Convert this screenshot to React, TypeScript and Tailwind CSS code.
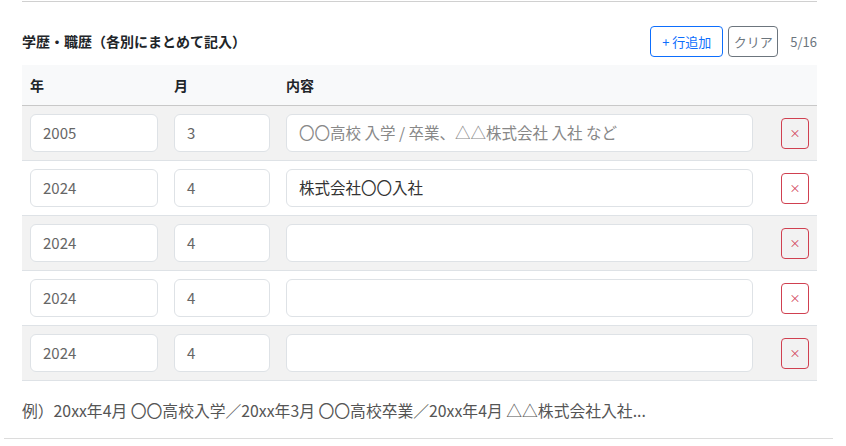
import React from "react";

type Row = { year: string; month: string; content: string };

const rows: Row[] = [
  { year: "2005", month: "3", content: "" },
  { year: "2024", month: "4", content: "株式会社〇〇入社" },
  { year: "2024", month: "4", content: "" },
  { year: "2024", month: "4", content: "" },
  { year: "2024", month: "4", content: "" },
];

const font = {
  fontFamily: '"Noto Sans CJK JP", "Noto Sans", sans-serif',
};

function HistoryRow({ row, index }: { row: Row; index: number }) {
  const striped = index % 2 === 0;
  return (
    <div
      className={`grid h-[55px] grid-cols-[144px_112px_483px_56px] items-center border-b border-[#dee2e6] ${
        striped ? "bg-[#f2f2f2]" : "bg-white"
      }`}
    >
      <div className="px-2">
        <div className="flex h-[38px] items-center rounded-md border border-[#dee2e6] bg-white px-3 text-[15px] text-[#666]">
          {row.year}
        </div>
      </div>
      <div className="px-2">
        <div className="flex h-[38px] items-center rounded-md border border-[#dee2e6] bg-white px-3 text-[15px] text-[#666]">
          {row.month}
        </div>
      </div>
      <div className="px-2">
        <div className="flex h-[38px] items-center rounded-md border border-[#dee2e6] bg-white px-3 text-[15.5px]">
          {index === 0 ? (
            <span className="text-[#888]">
              〇〇高校 入学 / 卒業、△△株式会社 入社 など
            </span>
          ) : (
            <span className="text-[#333]">{row.content}</span>
          )}
        </div>
      </div>
      <div className="flex justify-end px-2">
        <button className="flex h-[31px] w-[28px] items-center justify-center rounded border border-[#d04050] text-[11px] leading-none text-[#d04050]">
          ×
        </button>
      </div>
    </div>
  );
}

export default function App() {
  return (
    <div className="h-[446px] w-[846px] bg-white text-[#212529]" style={font}>
      <div className="pt-px">
        <div className="ml-[22px] w-[795px] border-t border-[#d0d0d0]" />
      </div>

      <section className="ml-[22px] w-[795px]">
        <div className="mt-[24px] flex h-[31px] items-center justify-between">
          <h2 className="text-[14px] font-semibold">学歴・職歴（各別にまとめて記入）</h2>
          <div className="flex items-center">
            <button className="h-[31px] w-[73px] rounded border border-[#0d6efd] text-[13px] text-[#0d6efd]">
              + 行追加
            </button>
            <button className="ml-[5px] h-[31px] w-[50px] rounded border border-[#6c757d] text-[13px] text-[#6c757d]">
              クリア
            </button>
            <span className="ml-[12px] text-[13px] text-[#6c757d]">5/16</span>
          </div>
        </div>

        <div className="mt-2">
          <div className="grid h-[41px] grid-cols-[144px_112px_483px_56px] items-center border-b border-[#c8c8c8] bg-[#f8f9fa] text-[14px] font-bold">
            <div className="px-2">年</div>
            <div className="px-2">月</div>
            <div className="px-2">内容</div>
            <div />
          </div>
          {rows.map((row, i) => (
            <HistoryRow key={i} row={row} index={i} />
          ))}
        </div>

        <p className="mt-[18px] text-[15.8px] text-[#555]">
          例）20xx年4月 〇〇高校入学／20xx年3月 〇〇高校卒業／20xx年4月 △△株式会社入社...
        </p>
      </section>

      <div className="ml-[4px] mt-[15px] w-[829px] border-t border-[#dcdcdc]" />
    </div>
  );
}
